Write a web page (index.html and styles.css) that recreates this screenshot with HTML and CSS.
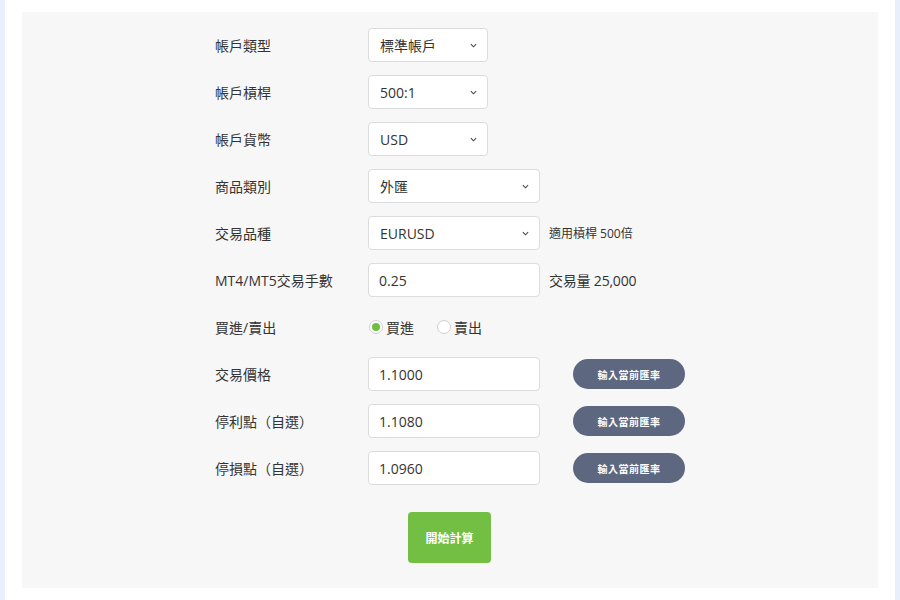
FILE: index.html
```html
<!DOCTYPE html>
<html lang="zh-Hant">
<head>
<meta charset="utf-8">
<link rel="stylesheet" href="styles.css">
</head>
<body>
<div class="page">
  <div class="panel">
    <div class="form">
      <div class="row">
        <div class="label">帳戶類型</div>
        <div class="select w120"><span>標準帳戶</span><svg class="chev" viewBox="0 0 8 5" width="7" height="5"><path d="M1 1 L4 4 L7 1" fill="none" stroke="#444" stroke-width="1.2"/></svg></div>
      </div>
      <div class="row">
        <div class="label">帳戶槓桿</div>
        <div class="select w120"><span>500:1</span><svg class="chev" viewBox="0 0 8 5" width="7" height="5"><path d="M1 1 L4 4 L7 1" fill="none" stroke="#444" stroke-width="1.2"/></svg></div>
      </div>
      <div class="row">
        <div class="label">帳戶貨幣</div>
        <div class="select w120"><span>USD</span><svg class="chev" viewBox="0 0 8 5" width="7" height="5"><path d="M1 1 L4 4 L7 1" fill="none" stroke="#444" stroke-width="1.2"/></svg></div>
      </div>
      <div class="row">
        <div class="label">商品類別</div>
        <div class="select w172"><span>外匯</span><svg class="chev" viewBox="0 0 8 5" width="7" height="5"><path d="M1 1 L4 4 L7 1" fill="none" stroke="#444" stroke-width="1.2"/></svg></div>
      </div>
      <div class="row">
        <div class="label">交易品種</div>
        <div class="select w172"><span>EURUSD</span><svg class="chev" viewBox="0 0 8 5" width="7" height="5"><path d="M1 1 L4 4 L7 1" fill="none" stroke="#444" stroke-width="1.2"/></svg></div>
        <div class="note small">適用槓桿 500倍</div>
      </div>
      <div class="row">
        <div class="label">MT4/MT5交易手數</div>
        <input class="field" type="text" value="0.25">
        <div class="note">交易量 25,000</div>
      </div>
      <div class="row">
        <div class="label">買進/賣出</div>
        <div class="radios">
          <span class="radio checked"><span class="dot"></span></span><span class="rlabel">買進</span>
          <span class="radio second"></span><span class="rlabel">賣出</span>
        </div>
      </div>
      <div class="row">
        <div class="label">交易價格</div>
        <input class="field" type="text" value="1.1000">
        <button class="rate">輸入當前匯率</button>
      </div>
      <div class="row">
        <div class="label">停利點（自選）</div>
        <input class="field" type="text" value="1.1080">
        <button class="rate">輸入當前匯率</button>
      </div>
      <div class="row">
        <div class="label">停損點（自選）</div>
        <input class="field" type="text" value="1.0960">
        <button class="rate">輸入當前匯率</button>
      </div>
      <div class="actions">
        <button class="start">開始計算</button>
      </div>
    </div>
  </div>
</div>
</body>
</html>
```
FILE: styles.css
```css
html, body {
  margin: 0;
  padding: 0;
}
body {
  background: #e9f0fc;
  font-family: "Open Sans", "Noto Sans CJK TC", sans-serif;
  color: #333;
}
.page {
  margin: 0 5px;
  background: #fff;
  height: 600px;
  padding: 12px 17px 0;
  box-sizing: border-box;
}
.panel {
  background: #f7f7f7;
  height: 576px;
  padding: 16px 0 0 193px;
  box-sizing: border-box;
}
.form {
  display: flex;
  flex-direction: column;
  gap: 13px;
}
.row {
  display: flex;
  align-items: center;
  height: 34px;
}
.label {
  width: 153px;
  font-size: 14px;
  color: #333;
}
.select {
  height: 34px;
  box-sizing: border-box;
  border: 1px solid #dcdcdc;
  border-radius: 4px;
  background: #fff;
  display: flex;
  align-items: center;
  justify-content: space-between;
  padding: 0 10px 0 11px;
  font-size: 14px;
}
.w120 { width: 120px; }
.w172 { width: 172px; }
.chev { display: block; }
.field {
  width: 172px;
  height: 34px;
  box-sizing: border-box;
  border: 1px solid #dcdcdc;
  border-radius: 4px;
  background: #fff;
  padding: 0 10px;
  font-family: "Open Sans", "Noto Sans CJK TC", sans-serif;
  font-size: 14px;
  color: #333;
  margin: 0;
  outline: none;
}
.note {
  margin-left: 9px;
  font-size: 14px;
  letter-spacing: -0.2px;
}
.note.small {
  font-size: 12px;
  letter-spacing: 0;
}
.radios {
  display: flex;
  align-items: center;
  font-size: 14px;
}
.radio {
  width: 14px;
  height: 14px;
  box-sizing: border-box;
  border: 1px solid #cfcfcf;
  border-radius: 50%;
  background: #fff;
  display: flex;
  align-items: center;
  justify-content: center;
  margin-left: 1px;
  margin-right: 3px;
}
.radio.second {
  margin-left: 23px;
}
.dot {
  width: 8px;
  height: 8px;
  border-radius: 50%;
  background: #6dbf3f;
}
.rate {
  margin-left: 33px;
  width: 112px;
  height: 30px;
  border: none;
  border-radius: 15px;
  background: #5d6880;
  color: #fff;
  font-family: "Noto Sans CJK TC", sans-serif;
  font-weight: bold;
  font-size: 10px;
  letter-spacing: 0.5px;
  padding: 0;
}
.actions {
  padding-left: 193px;
  margin-top: 14px;
}
.start {
  width: 83px;
  height: 51px;
  border: none;
  border-radius: 4px;
  background: #72bf44;
  color: #fff;
  font-family: "Noto Sans CJK TC", sans-serif;
  font-weight: bold;
  font-size: 12px;
  padding: 0;
}
```
